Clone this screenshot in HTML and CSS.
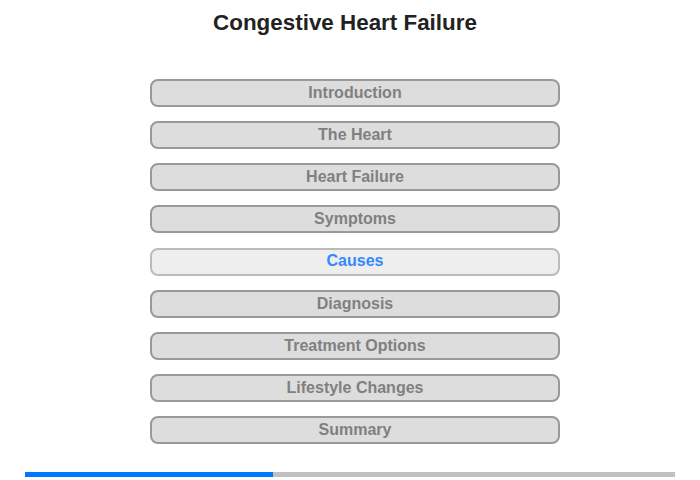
FILE: index.html
```html
<!DOCTYPE html>
<html>
<head>
<meta charset="utf-8">
<link rel="stylesheet" href="styles.css">
</head>
<body>
<div class="page">
  <h1 class="title">Congestive Heart Failure</h1>
  <nav class="menu">
    <div class="item">Introduction</div>
    <div class="item">The Heart</div>
    <div class="item">Heart Failure</div>
    <div class="item">Symptoms</div>
    <div class="item active">Causes</div>
    <div class="item">Diagnosis</div>
    <div class="item">Treatment Options</div>
    <div class="item">Lifestyle Changes</div>
    <div class="item">Summary</div>
  </nav>
  <div class="progress"><div class="fill" style="width:248px"></div></div>
</div>
</body>
</html>
```
FILE: styles.css
```css
html, body {
  margin: 0;
  padding: 0;
  background: #fff;
}
.page {
  width: 700px;
  height: 480px;
  font-family: "Liberation Sans", Arial, sans-serif;
  display: flex;
  flex-direction: column;
  align-items: center;
}
.title {
  margin: 10px 10px 0 0;
  font-size: 22.4px;
  line-height: 26px;
  font-weight: bold;
  color: #222;
}
.menu {
  margin: 43px 0 0 10px;
  display: flex;
  flex-direction: column;
  gap: 14.125px;
}
.item {
  box-sizing: border-box;
  width: 410px;
  height: 28px;
  border: 2px solid #999;
  border-radius: 8px;
  background: #ddd;
  color: #808080;
  font-size: 16px;
  font-weight: bold;
  line-height: 24px;
  text-align: center;
}
.item.active {
  background: #eee;
  border-color: #bbb;
  color: #3388ff;
  line-height: 22px;
}
.progress {
  margin-top: 28px;
  width: 650px;
  height: 5px;
  background: #c0c0c0;
}
.fill {
  height: 100%;
  background: #0077ff;
}
```
